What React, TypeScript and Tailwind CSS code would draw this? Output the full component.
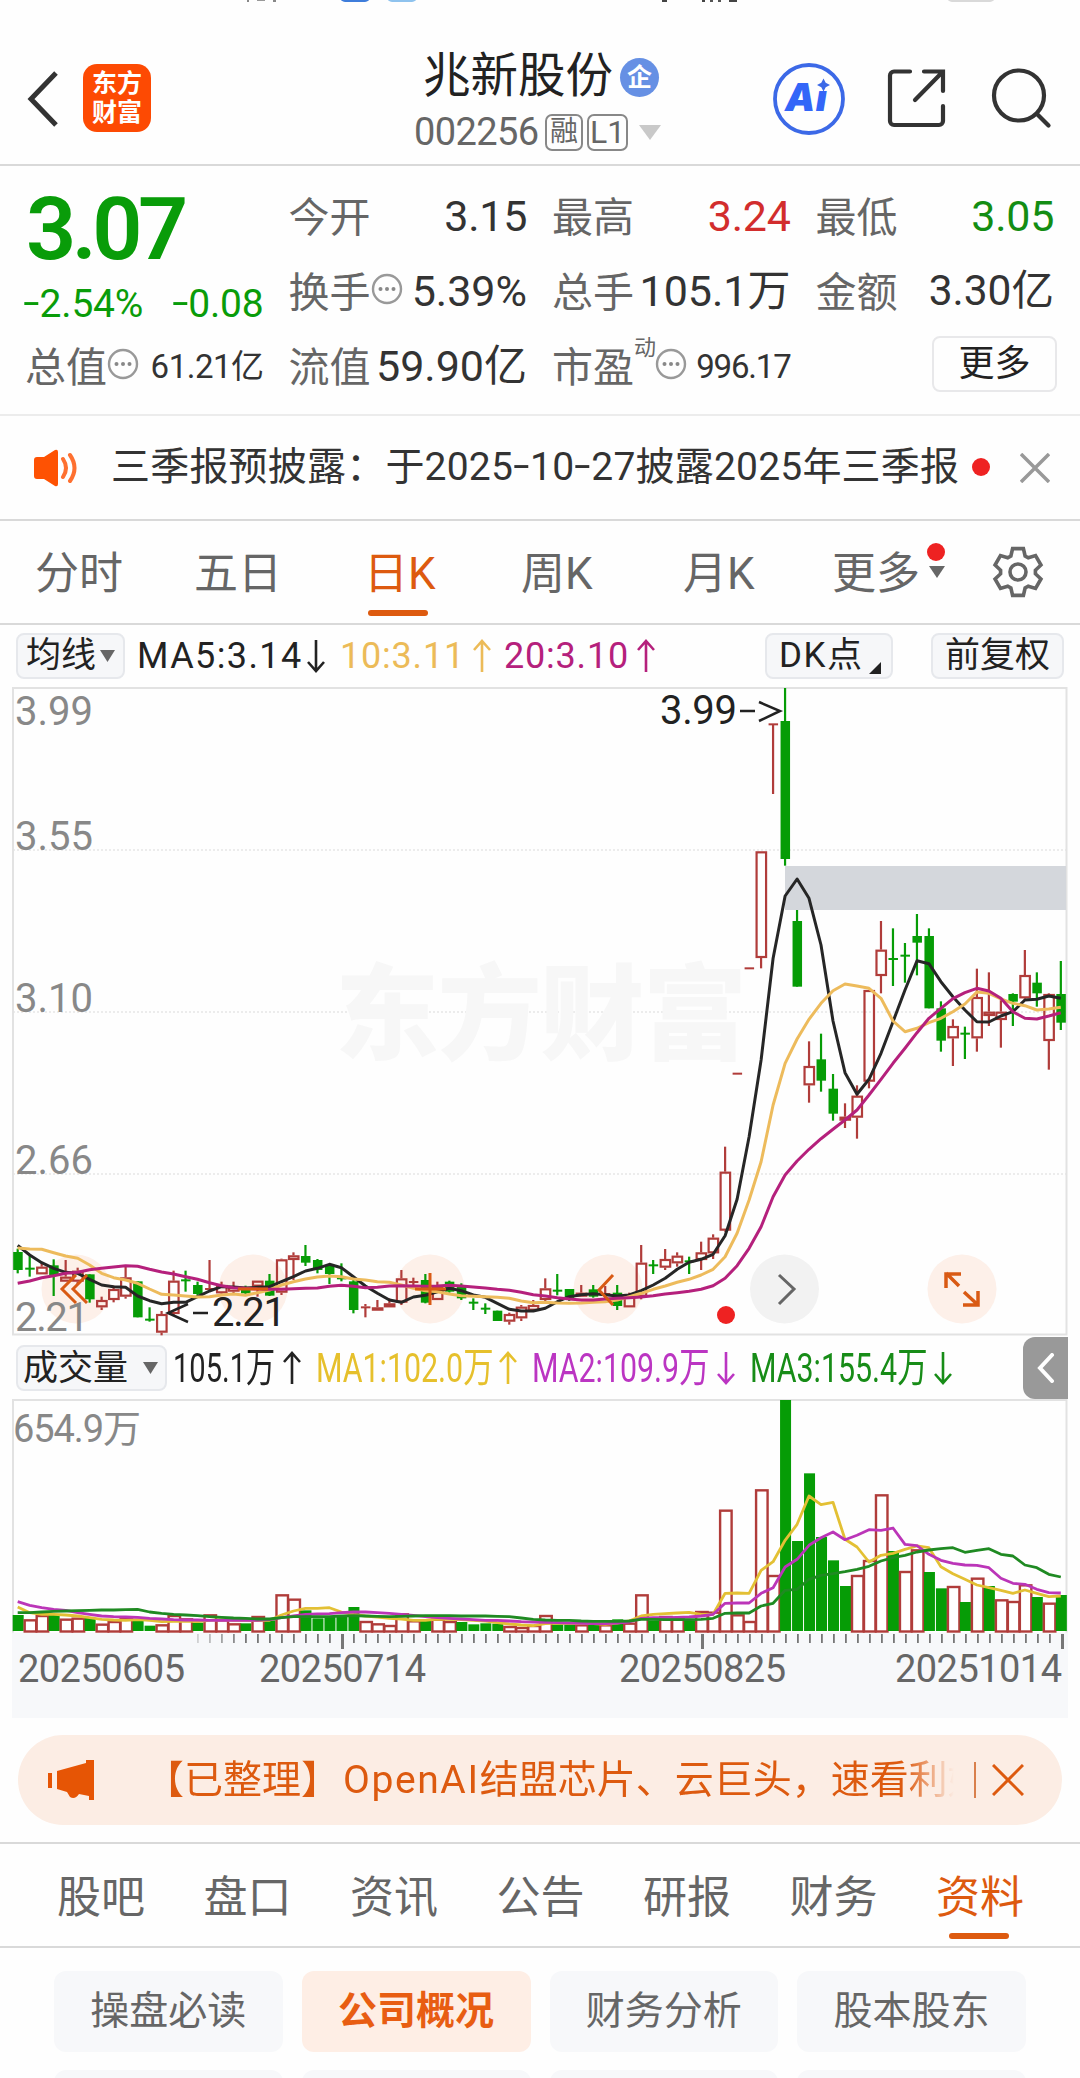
import type { ReactNode } from 'react';

type Candle = [string, number, number, number, number];

// [colour, high, body top, body bottom, low] in thirds of a pixel
const candles: Candle[] = [
  ['g', 1706, 1716, 1770, 1780], ['g', 1728, 1763, 1768, 1790], ['r', 1750, 1760, 1783, 1783], ['g', 1738, 1756, 1788, 1848],
  ['r', 1740, 1790, 1805, 1805], ['r', 1763, 1772, 1805, 1815], ['g', 1783, 1783, 1858, 1868], ['r', 1850, 1860, 1882, 1890],
  ['r', 1817, 1827, 1860, 1867], ['r', 1760, 1792, 1850, 1856], ['g', 1804, 1804, 1912, 1912], ['g', 1882, 1916, 1921, 1925],
  ['r', 1893, 1902, 1958, 1966], ['r', 1772, 1802, 1902, 1905], ['g', 1772, 1798, 1803, 1835], ['g', 1805, 1815, 1842, 1852],
  ['r', 1740, 1824, 1828, 1835], ['r', 1805, 1815, 1840, 1845], ['r', 1805, 1820, 1835, 1845], ['g', 1817, 1825, 1840, 1842],
  ['r', 1802, 1802, 1820, 1850], ['g', 1782, 1802, 1847, 1848], ['r', 1736, 1738, 1838, 1845], ['r', 1717, 1726, 1740, 1800],
  ['g', 1695, 1728, 1748, 1758], ['g', 1737, 1740, 1770, 1780], ['g', 1755, 1758, 1782, 1812], ['g', 1750, 1792, 1798, 1804],
  ['g', 1795, 1804, 1890, 1900], ['r', 1872, 1879, 1884, 1912], ['r', 1860, 1882, 1892, 1892], ['r', 1855, 1870, 1882, 1882],
  ['r', 1770, 1795, 1868, 1875], ['r', 1793, 1803, 1808, 1820], ['g', 1782, 1800, 1868, 1870], ['r', 1805, 1820, 1860, 1860],
  ['g', 1802, 1805, 1835, 1838], ['g', 1810, 1820, 1855, 1860], ['g', 1855, 1865, 1870, 1890], ['g', 1870, 1883, 1888, 1902],
  ['g', 1892, 1892, 1923, 1923], ['r', 1898, 1902, 1925, 1934], ['r', 1875, 1880, 1915, 1923], ['r', 1860, 1875, 1892, 1895],
  ['r', 1795, 1825, 1860, 1865], ['g', 1782, 1829, 1834, 1846], ['g', 1827, 1827, 1855, 1863], ['r', 1815, 1838, 1850, 1850],
  ['g', 1815, 1828, 1850, 1853], ['r', 1818, 1839, 1844, 1855], ['g', 1815, 1838, 1878, 1890], ['r', 1838, 1850, 1882, 1882],
  ['r', 1695, 1748, 1850, 1858], ['g', 1740, 1753, 1758, 1782], ['r', 1707, 1737, 1763, 1770], ['r', 1717, 1727, 1750, 1760],
  ['g', 1730, 1741, 1746, 1782], ['r', 1685, 1717, 1740, 1770], ['r', 1663, 1673, 1720, 1737], ['r', 1400, 1475, 1652, 1655],
  ['r', 1178, 1178, 1184, 1184], ['r', 862, 862, 868, 868], ['r', 514, 514, 834, 865], ['r', 130, 130, 135, 342],
  ['g', 24, 123, 537, 557], ['g', 690, 723, 920, 920], ['r', 1084, 1158, 1216, 1268], ['g', 1061, 1138, 1202, 1235],
  ['g', 1182, 1226, 1301, 1322], ['r', 1270, 1310, 1322, 1344], ['r', 1216, 1247, 1313, 1376], ['r', 930, 930, 1205, 1225],
  ['r', 723, 809, 888, 940], ['g', 745, 834, 840, 918], ['g', 789, 824, 830, 908], ['g', 702, 768, 788, 886],
  ['g', 745, 768, 985, 985], ['g', 964, 985, 1082, 1115], ['r', 1018, 1038, 1075, 1158], ['g', 1040, 1058, 1063, 1137],
  ['r', 866, 951, 1075, 1115], ['r', 877, 995, 1008, 1038], ['r', 960, 995, 1020, 1103], ['g', 940, 942, 965, 1038],
  ['r', 810, 885, 955, 960], ['g', 877, 908, 940, 980], ['r', 940, 942, 1083, 1169], ['g', 843, 942, 1028, 1050],
];

const ma5 = [
  1696, 1725, 1748, 1765, 1777, 1780, 1798, 1815, 1820, 1822, 1848, 1862, 1871, 1867, 1867, 1850, 1833, 1820, 1821, 1824, 1822, 1820,
  1805, 1790, 1773, 1765, 1753, 1763, 1790, 1818, 1840, 1860, 1867, 1851, 1846, 1835, 1825, 1832, 1845, 1852, 1870, 1888, 1893, 1893,
  1885, 1865, 1850, 1844, 1841, 1844, 1848, 1845, 1832, 1815, 1795, 1768, 1747, 1738, 1723, 1667, 1558, 1370, 1140, 835, 648, 597,
  655, 795, 1023, 1178, 1243, 1198, 1120, 1025, 930, 842, 851, 905, 950, 990, 1025, 1026, 1008, 995, 960, 958, 948, 955,
];
const ma10 = [
  1704, 1707, 1708, 1718, 1728, 1735, 1755, 1780, 1793, 1800, 1810, 1827, 1843, 1845, 1848, 1851, 1850, 1845, 1842, 1846, 1838, 1830,
  1815, 1805, 1797, 1791, 1788, 1790, 1797, 1800, 1805, 1807, 1815, 1825, 1832, 1835, 1842, 1847, 1849, 1850, 1852, 1855, 1863, 1868,
  1867, 1869, 1870, 1869, 1867, 1865, 1860, 1850, 1840, 1828, 1818, 1807, 1798, 1785, 1768, 1730, 1660, 1560, 1445, 1275, 1150, 1077,
  1018, 970, 932, 912, 918, 925, 955, 1023, 1055, 1045, 1028, 1015, 995, 972, 936, 940, 957, 970, 977, 990, 987, 982,
];
const ma20 = [
  1810, 1803, 1793, 1787, 1780, 1777, 1769, 1765, 1761, 1757, 1759, 1768, 1776, 1782, 1790, 1798, 1808, 1817, 1823, 1825, 1827, 1828,
  1828, 1826, 1825, 1824, 1819, 1816, 1819, 1823, 1822, 1818, 1817, 1818, 1819, 1818, 1816, 1818, 1821, 1824, 1828, 1831, 1837, 1844,
  1848, 1853, 1857, 1860, 1860, 1857, 1855, 1853, 1851, 1847, 1842, 1838, 1834, 1828, 1817, 1795, 1757, 1705, 1640, 1550, 1485, 1443,
  1408, 1376, 1348, 1320, 1290, 1245, 1198, 1150, 1105, 1058, 1015, 985, 956, 938, 925, 933, 955, 995, 1015, 1017, 1008, 998,
];

// top edge of every volume bar
const volumes = [
  852, 865, 852, 852, 863, 860, 860, 878, 870, 858, 870, 884, 880, 852, 862, 875, 850, 865, 877, 877, 855, 868,
  790, 803, 838, 862, 858, 855, 828, 870, 877, 882, 847, 868, 866, 863, 870, 873, 880, 877, 878, 885, 888, 882,
  852, 880, 880, 880, 880, 880, 865, 875, 790, 868, 855, 862, 868, 840, 842, 536, 850, 870, 475, 732, 207, 630,
  427, 618, 688, 765, 732, 687, 490, 660, 720, 655, 723, 772, 765, 813, 740, 765, 805, 810, 760, 798, 815, 792,
];
const volumeColors = 'grrgrrgrrrggrrrgrrrgrgrrgggggrrrrrgrrggggrrrrggrgrgrrgrrgrrrrrrrggggggrrrgrrggrgrgrrrgrg';
const vol1 = [
  828, 845, 850, 850, 852, 855, 860, 865, 867, 868, 866, 868, 872, 871, 870, 872, 868, 866, 868, 868, 869, 868,
  852, 840, 832, 832, 830, 843, 850, 855, 858, 862, 864, 868, 868, 864, 865, 866, 868, 870, 875, 879, 882, 884,
  878, 876, 878, 878, 878, 880, 876, 870, 855, 850, 848, 846, 844, 850, 850, 787, 786, 787, 718, 692, 628, 580,
  495, 521, 514, 625, 648, 693, 673, 667, 655, 645, 650, 707, 728, 745, 762, 770, 778, 787, 777, 787, 797, 795,
];
const vol2 = [
  812, 823, 830, 835, 838, 845, 850, 855, 857, 858, 859, 862, 864, 866, 867, 867, 868, 868, 868, 868, 868, 866,
  860, 855, 850, 849, 848, 845, 843, 843, 845, 847, 850, 853, 857, 860, 862, 864, 866, 868, 868, 870, 872, 873,
  874, 875, 876, 877, 878, 878, 876, 873, 862, 860, 860, 859, 858, 855, 850, 817, 816, 816, 787, 770, 708, 685,
  643, 620, 603, 626, 613, 596, 598, 591, 640, 644, 670, 688, 697, 702, 703, 710, 742, 757, 760, 775, 785, 786,
];
const vol3 = [
  845, 845, 843, 841, 840, 839, 838, 837, 837, 836, 835, 843, 847, 850, 852, 854, 857, 859, 861, 862, 864, 864,
  860, 857, 857, 857, 857, 855, 854, 855, 856, 857, 856, 855, 854, 854, 854, 855, 855, 855, 856, 857, 861, 865,
  867, 868, 868, 870, 871, 871, 871, 870, 865, 865, 866, 866, 866, 865, 862, 847, 846, 846, 825, 817, 778, 775,
  745, 733, 728, 722, 715, 706, 690, 680, 673, 663, 657, 653, 650, 664, 658, 653, 670, 675, 702, 710, 730, 738,
];

const cx = (i: number) => 17.7 + i * 11.99;
const py = (v: number) => 680 + v / 3;
const vy = (v: number) => 1330 + v / 3;
const line = (data: number[], y: (v: number) => number) => data.map((v, i) => `${cx(i).toFixed(1)},${y(v).toFixed(1)}`).join(' ');

// six teeth, four corners each
const gear = [0, 60, 120, 180, 240, 300]
  .flatMap((a) => [[a - 24, 17.5], [a - 13, 24], [a + 13, 24], [a + 24, 17.5]])
  .map(([a, r]) => `${26 + r * Math.sin((a * Math.PI) / 180)},${26 - r * Math.cos((a * Math.PI) / 180)}`)
  .join(' ');

function Caret({ className }: { className: string }) {
  return (
    <svg viewBox="0 0 16 12" preserveAspectRatio="none" className={className} fill="currentColor">
      <path d="M0 0h16L8 12z" />
    </svg>
  );
}

function Arrow({ down }: { down?: boolean }) {
  return (
    <svg viewBox="0 0 20 36" className="h-9 w-5 shrink-0" fill="none" stroke="currentColor" strokeWidth="2.600">
      {down ? <path d="M10 2v31M2 24l8 9 8-9" /> : <path d="M10 34V3M2 12l8-9 8 9" />}
    </svg>
  );
}

function Dash() {
  return <span className="relative -top-[2px] mx-[3px] inline-block scale-x-150">-</span>;
}

function Info() {
  return (
    <svg viewBox="0 0 32 32" className="-mt-[5px] h-8 w-8 shrink-0" fill="none" stroke="#999" strokeWidth="2.400">
      <circle cx="16" cy="16" r="14" />
      <g fill="#888" stroke="none">
        <circle cx="9.500" cy="16" r="2" />
        <circle cx="16" cy="16" r="2" />
        <circle cx="22.500" cy="16" r="2" />
      </g>
    </svg>
  );
}

function StatusBar() {
  return (
    <div className="relative h-[18px] shrink-0 overflow-hidden">
      <div className="absolute -top-2 left-[340px] h-[10px] w-[30px] rounded-md bg-[#3f7ddb]" />
      <div className="absolute -top-2 left-[387px] h-[10px] w-[30px] rounded-md bg-[#8fc3ee]" />
      <div className="absolute -top-2 left-[947px] h-[10px] w-[48px] rounded-md bg-[#d9d9d9]" />
      <div className="absolute top-0 left-[247px] h-[2px] w-[2px] bg-[#888]" />
      <div className="absolute top-0 left-[257px] h-px w-[8px] bg-[#999]" />
      <div className="absolute top-0 left-[273px] h-[2px] w-[3px] bg-[#888]" />
      <div className="absolute top-0 left-[662px] h-[2px] w-[5px] bg-[#444]" />
      <div className="absolute top-0 left-[702px] h-[2px] w-[3px] bg-[#444]" />
      <div className="absolute top-0 left-[710px] h-[2px] w-[3px] bg-[#555]" />
      <div className="absolute top-0 left-[718px] h-[2px] w-[3px] bg-[#555]" />
      <div className="absolute top-0 left-[729px] h-[2px] w-[8px] bg-[#444]" />
    </div>
  );
}

function Header() {
  return (
    <header className="flex h-[148px] shrink-0 border-b-2 border-[#d9d9d9]">
      <div className="flex w-[400px] pt-[46px] pl-[26px]">
        <svg viewBox="0 0 34 58" className="mt-[6px] h-[58px] w-[34px]" fill="none" stroke="#333" strokeWidth="5">
          <path d="M30 3L5 29l25 26" />
        </svg>
        <div className="ml-[23px] flex h-[68px] w-[68px] flex-col items-center justify-center rounded-[14px] bg-[#fd4a03] text-[25px] leading-[29px] font-bold text-white">
          <span>东方</span>
          <span>财富</span>
        </div>
      </div>
      <div className="w-[280px]">
        <div className="mt-[27px] flex h-[64px] items-center pl-[23px]">
          <h1 className="w-[197px] text-[47.500px] leading-none whitespace-nowrap text-[#222]">兆新股份</h1>
          <span className="flex h-[39px] w-[39px] items-center justify-center rounded-full bg-[#6690e4] text-[25px] leading-none font-bold text-white">企</span>
        </div>
        <div className="mt-[2px] flex h-[42px] items-center pl-[14px] text-[#666]">
          <span className="w-[131px] text-[38px] leading-none tracking-[-0.6px]">002256</span>
          <span className="flex h-[37px] w-[38px] items-center justify-center rounded-[7px] border-2 border-[#888] text-[28px] leading-none">融</span>
          <span className="ml-[4px] flex h-[37px] w-[41px] items-center justify-center rounded-[7px] border-2 border-[#888] text-[32px] leading-none">L1</span>
          <Caret className="ml-[11px] h-[15px] w-[22px] text-[#c9c9c9]" />
        </div>
      </div>
      <div className="flex flex-1 pl-[92px]">
        <svg viewBox="0 0 74 74" className="mt-[44px] h-[74px] w-[74px]">
          <circle cx="37" cy="37" r="34" fill="none" stroke="#3c69e7" strokeWidth="3.800" />
          <text x="13" y="49" fontSize="38" fontWeight="900" fontStyle="italic" fill="#3366f8" className="font-['Inter']" textLength="42">Ai</text>
          <path d="M42 14h16v15H42z" fill="#fefefe" />
          <path d="M51.500 16.500l2.200 4.300 4.300 2.200-4.300 2.200-2.200 4.300-2.200-4.300-4.300-2.200 4.300-2.200z" fill="#3c69e7" />
        </svg>
        <svg viewBox="0 0 62 62" className="mt-[49px] ml-[40px] h-[62px] w-[62px]" fill="none" stroke="#333" strokeWidth="4.200" strokeLinecap="round">
          <path d="M24 4.500H8a4 4 0 0 0-4 4v45.500a4 4 0 0 0 4 4h45a4 4 0 0 0 4-4V39" />
          <path d="M38 4.500h19V24M56 5.500L29 33" />
        </svg>
        <svg viewBox="0 0 64 64" className="mt-[49px] ml-[42px] h-[64px] w-[64px]" fill="none" stroke="#333" strokeWidth="4.200" strokeLinecap="round">
          <circle cx="29" cy="28.500" r="25" />
          <path d="M47.500 47.500L58.500 58.500" />
        </svg>
      </div>
    </header>
  );
}

function Quote({ label, info, sup, value, className = 'text-[43px] tracking-[-0.3px] text-[#333]' }: { label: string; info?: boolean; sup?: string; value: string; className?: string }) {
  return (
    <div className="-ml-px flex items-center whitespace-nowrap">
      <span className="mt-[3px] text-[41px] leading-none text-[#666]">{label}</span>
      {sup && <span className="-mr-px mb-[38px] text-[22px] leading-none text-[#666]">{sup}</span>}
      {info && <Info />}
      <span className="w-0 flex-1" />
      <span className={`leading-none ${className}`}>{value}</span>
    </div>
  );
}

function Quotes() {
  return (
    <section className="h-[250px] shrink-0 border-b-2 border-[#ececec] px-[26px] pt-[13px]">
      <div className="grid grid-cols-4 grid-rows-[75px_75px_75px] gap-x-[26px]">
        <div className="row-span-2 text-[#099c09]">
          <div className="mt-[8px] text-[88px] leading-[84px] font-semibold tracking-[-4.500px]">3.07</div>
          <div className="-ml-[3px] mt-[12px] flex justify-between text-[39px] leading-[42px] tracking-[-0.2px]">
            <span><Dash />2.54%</span>
            <span><Dash />0.08</span>
          </div>
        </div>
        <Quote label="今开" value="3.15" />
        <Quote label="最高" value="3.24" className="text-[43px] tracking-[-0.3px] text-[#d22d2d]" />
        <Quote label="最低" value="3.05" className="text-[43px] tracking-[-0.3px] text-[#138d13]" />
        <Quote label="换手" info value="5.39%" className="text-[43px] text-[#333]" />
        <Quote label="总手" value="105.1万" className="text-[43px] text-[#333]" />
        <Quote label="金额" value="3.30亿" className="text-[42.500px] text-[#333]" />
        <Quote label="总值" info value="61.21亿" className="text-[33px] tracking-[-0.5px] text-[#333]" />
        <Quote label="流值" value="59.90亿" className="text-[43px] text-[#333]" />
        <Quote label="市盈" sup="动" info value="996.17" className="text-[33px] tracking-[-1.200px] text-[#333]" />
        <div className="-mr-[3px] mb-[5px] flex items-center justify-end">
          <button className="h-[56px] w-[125px] rounded-lg border-2 border-[#e8e8ea] text-[36px] leading-none text-[#222]">更多</button>
        </div>
      </div>
    </section>
  );
}

function Notice() {
  return (
    <div className="flex h-[105px] shrink-0 items-center border-b-2 border-[#d9d9d9] pl-[32px] whitespace-nowrap">
      <svg viewBox="0 0 48 38" className="h-[38px] w-[48px] shrink-0" fill="#fe5203">
        <path d="M2 11q0-3 3-3h7L23 1q3-1 3 2v32q0 3-3 2l-11-7H5q-3 0-3-3z" />
        <path d="M31 10q6 9 0 18M38 6q9 13 0 26" fill="none" stroke="#fe7030" strokeWidth="4" strokeLinecap="round" />
      </svg>
      <span className="ml-[31px] w-[861px] shrink-0 text-[39px] leading-none tracking-[0.200px] text-[#333]">三季报预披露：于2025<Dash />10<Dash />27披露2025年三季报</span>
      <span className="-mt-[2px] h-[18px] w-[18px] shrink-0 rounded-full bg-[#ee2222]" />
      <svg viewBox="0 0 30 30" className="ml-[30px] h-[30px] w-[30px] shrink-0" stroke="#999" strokeWidth="3.500">
        <path d="M1 1l28 28M29 1L1 29" />
      </svg>
    </div>
  );
}

function PeriodTabs() {
  return (
    <nav className="flex h-[104px] shrink-0 items-center border-b-2 border-[#d9d9d9] pt-[4px] text-[44px] leading-none whitespace-nowrap text-[#666]">
      <span className="w-[159px] pl-[35px]">分时</span>
      <span className="w-[205px] pl-[35px]">五日</span>
      <span className="relative w-[157px] text-[#dd5a0f]">
        日K
        <i className="absolute top-[58px] left-[4px] h-[6px] w-[60px] rounded-full bg-[#dd5a0f]" />
      </span>
      <span className="w-[162px]">周K</span>
      <span className="w-[149px]">月K</span>
      <span className="relative w-[160px]">
        更多
        <i className="absolute -top-[9px] left-[95px] h-[18px] w-[18px] rounded-full bg-[#ee2222]" />
        <Caret className="absolute top-[14px] left-[97px] h-[12px] w-[16px]" />
      </span>
      <svg viewBox="0 0 52 52" className="-mt-[4px] h-[52px] w-[52px]" fill="none" stroke="#666" strokeWidth="3.600">
        <polygon points={gear} />
        <circle cx="26" cy="26" r="8" />
      </svg>
    </nav>
  );
}

function Chip({ className, children }: { className: string; children: ReactNode }) {
  return <div className={`flex shrink-0 items-center rounded-lg border-2 border-[#e6e8ec] bg-[#f6f7f9] text-[35px] leading-none whitespace-nowrap text-[#222] ${className}`}>{children}</div>;
}

function MaBar() {
  return (
    <div className="flex h-[62px] shrink-0 items-center pb-px pl-[16px] text-[36px] leading-none whitespace-nowrap">
      <Chip className="h-[46px] w-[109px] pl-[8px]">
        均线
        <Caret className="ml-[4px] h-[12px] w-[15px] text-[#666]" />
      </Chip>
      <span className="ml-[12px] flex w-[203px] items-center text-[#222]">
        <span className="w-[169px] tracking-[1.400px]">MA5:3.14</span>
        <Arrow down />
      </span>
      <span className="flex w-[164px] items-center text-[#ecbb58]">
        <span className="w-[132px] tracking-[0.8px]">10:3.11</span>
        <Arrow />
      </span>
      <span className="flex w-[261px] items-center text-[#b5207c]">
        <span className="w-[132px] tracking-[0.8px]">20:3.10</span>
        <Arrow />
      </span>
      <Chip className="h-[46px] w-[128px] pl-[12px]">
        <span className="tracking-[1.500px]">DK</span>
        点
        <svg viewBox="0 0 12 12" className="mt-[24px] ml-[7px] h-[12px] w-[12px]" fill="#222">
          <path d="M12 0v12H0z" />
        </svg>
      </Chip>
      <Chip className="ml-[38px] h-[46px] w-[133px] justify-center">前复权</Chip>
    </div>
  );
}

function PriceChart() {
  return (
    <svg viewBox="0 687 1080 650" className="h-[650px] w-[1080px] shrink-0">
      <g stroke="#e6e6e6" strokeWidth="1.500" strokeDasharray="2 2">
        <path d="M13 850H1066M13 1012H1066M13 1174H1066" />
      </g>
      <rect x="13" y="688" width="1053.500" height="646.500" fill="none" stroke="#e2e2e2" strokeWidth="2" />
      <text x="335" y="1052" fontSize="104" fontWeight="900" fill="#f7f7f7" textLength="412">东方财富</text>
      <rect x="785" y="866" width="281" height="44" fill="#d4d7dc" />
      <g fill="#fdf0e9">
        <circle cx="76" cy="1289" r="34.500" />
        <circle cx="253" cy="1289" r="34.500" />
        <circle cx="430" cy="1289" r="34.500" />
        <circle cx="608" cy="1289" r="34.500" />
        <circle cx="962" cy="1289" r="34.500" />
      </g>
      <circle cx="784.500" cy="1289" r="34.500" fill="#f2f2f2" />
      <g fill="#888" fontSize="40">
        <text x="15" y="725">3.99</text>
        <text x="15" y="850">3.55</text>
        <text x="15" y="1012">3.10</text>
        <text x="15" y="1174">2.66</text>
        <text x="15" y="1331" textLength="74">2.21</text>
      </g>
      {candles.map(([color, high, top, bottom, low], i) => {
        const x = cx(i);
        const h = Math.max((bottom - top) / 3, 2);
        if (color === 'g') {
          return (
            <g key={i} fill="#069c06">
              <rect x={x - 1.1} y={py(high)} width="2.200" height={(low - high) / 3} />
              <rect x={x - 4.5} y={py(top)} width="9.500" height={h} />
            </g>
          );
        }
        return (
          <g key={i} fill="#b03c3a">
            <rect x={x - 1.1} y={py(high)} width="2.200" height={(top - high) / 3} />
            <rect x={x - 1.1} y={py(bottom)} width="2.200" height={(low - bottom) / 3} />
            {h < 3 ? (
              <rect x={x - 4.5} y={py(top)} width="9.500" height={h} />
            ) : (
              <rect x={x - 4.5} y={py(top) + 1} width="9.500" height={h - 2} fill="none" stroke="#b03c3a" strokeWidth="2.200" />
            )}
          </g>
        );
      })}
      <g fill="none" strokeWidth="3" strokeLinejoin="round">
        <polyline points={line(ma5, py)} stroke="#262626" />
        <polyline points={line(ma10, py)} stroke="#edbb5c" />
        <polyline points={line(ma20, py)} stroke="#b5207c" />
      </g>
      <g fill="none" stroke="#222" strokeWidth="2.500">
        <path d="M759 702l21 9-21 10M740 711h15" />
        <path d="M188 1304l-20 9 20 9M193 1313h15" />
      </g>
      <g fill="#222" fontSize="40">
        <text x="660" y="724" textLength="77">3.99</text>
        <text x="212" y="1326" textLength="74">2.21</text>
      </g>
      <g fill="none" stroke="#d95a14" strokeWidth="3">
        <path d="M76 1275l-14 14 14 14M87 1275l-14 14 14 14" />
        <path d="M238 1289h30M415 1289h31M430 1273v32" />
        <path d="M613 1275l-14 15 14 15" />
        <path d="M959 1286l-13-13M946 1288v-14h15M964 1292l14 13M978 1291v14h-15" strokeWidth="3.500" />
      </g>
      <path d="M779 1275l15 14-15 15" fill="none" stroke="#666" strokeWidth="3" />
      <circle cx="726" cy="1315" r="9" fill="#ee2222" />
    </svg>
  );
}

function VolumeBar() {
  return (
    <div className="flex h-[62px] shrink-0 items-center pl-[16px] text-[41px] leading-none whitespace-nowrap">
      <Chip className="h-[46px] w-[151px] justify-between pr-[7px] pl-[5px]">
        成交量
        <Caret className="h-[12px] w-[15px] text-[#666]" />
      </Chip>
      <span className="ml-[6px] flex w-[143px] items-center text-[#222]">
        <span className="w-[109px] origin-left scale-x-[0.71]">105.1万</span>
        <Arrow />
      </span>
      <span className="flex w-[216px] items-center text-[#e6c02c]">
        <span className="w-[182px] origin-left scale-x-[0.740]">MA1:102.0万</span>
        <Arrow />
      </span>
      <span className="flex w-[218px] items-center text-[#bb35c2]">
        <span className="w-[184px] origin-left scale-x-[0.740]">MA2:109.9万</span>
        <Arrow down />
      </span>
      <span className="flex w-[273px] items-center text-[#178c17]">
        <span className="w-[183px] origin-left scale-x-[0.740]">MA3:155.4万</span>
        <Arrow down />
      </span>
      <div className="flex h-[62px] w-[45px] items-center justify-center rounded-l-[12px] bg-[#999]">
        <svg viewBox="0 0 18 30" className="h-[30px] w-[18px]" fill="none" stroke="#fff" strokeWidth="4" strokeLinecap="round">
          <path d="M15 2L3 15l12 13" />
        </svg>
      </div>
    </div>
  );
}

function VolumeChart() {
  return (
    <svg viewBox="0 1398 1080 320" className="h-[320px] w-[1080px] shrink-0">
      <path d="M13 1632V1399H1066.500V1632" fill="none" stroke="#e2e2e2" strokeWidth="2" />
      <rect x="12" y="1631.500" width="1056" height="85.500" fill="#f7f8fa" />
      <text x="13" y="1441" fontSize="38" fill="#888" textLength="128">654.9万</text>
      {volumes.map((v, i) => {
        const x = cx(i);
        return volumeColors[i] === 'g' ? (
          <rect key={i} x={x - 5} y={vy(v)} width="11" height={1630 - vy(v)} fill="#069c06" />
        ) : (
          <rect key={i} x={x - 5} y={vy(v) + 1} width="11.500" height={1629.5 - vy(v)} fill="#fff" stroke="#b03c3a" strokeWidth="2.400" />
        );
      })}
      <g fill="none" strokeWidth="2.800" strokeLinejoin="round">
        <polyline points={line(vol1, vy)} stroke="#e3c034" />
        <polyline points={line(vol2, vy)} stroke="#bb35b8" />
        <polyline points={line(vol3, vy)} stroke="#1f8a22" />
      </g>
      {Array.from({ length: 73 }, (_, i) => {
        const major = i === 12 || i === 42 || i === 72;
        return <rect key={i} x={197 + i * 12} y="1633" width={major ? 3 : 1.8} height={major ? 15 : 9} fill="#777" opacity={Math.min(1, 0.3 + i * 0.18)} />;
      })}
      <g fill="#666" fontSize="38">
        <text x="18" y="1681" textLength="167">20250605</text>
        <text x="259" y="1681" textLength="167">20250714</text>
        <text x="619" y="1681" textLength="167">20250825</text>
        <text x="895" y="1681" textLength="167">20251014</text>
      </g>
    </svg>
  );
}

function Banner() {
  return (
    <div className="mx-[18px] mt-[16px] mb-[17px] flex h-[90px] shrink-0 items-center rounded-full bg-[#fcede4] whitespace-nowrap">
      <svg viewBox="0 0 46 40" className="ml-[30px] h-[40px] w-[46px] shrink-0" fill="#e65505">
        <path d="M0 13h4v15H0zM9 11L38 3V0h8v40h-5v-4l-10-2q-4 6-9 3l-3-5-10-3z" />
      </svg>
      <span className="ml-[48px] w-[820px] shrink-0 overflow-hidden mask-r-from-93% mask-r-to-99% pl-[3px] text-[39px] leading-[60px] text-[#dd5a0f]">
        【已整理】<span className="ml-[3px] tracking-[1.600px]">OpenAI</span>结盟芯片、云巨头，速看利好
      </span>
      <span className="ml-[12px] h-[36px] w-[2px] bg-[#d9804c]" />
      <svg viewBox="0 0 32 32" className="ml-[16px] h-[32px] w-[32px] shrink-0" stroke="#dd5a0f" strokeWidth="3">
        <path d="M1 1l30 30M31 1L1 31" />
      </svg>
    </div>
  );
}

function SectionTabs() {
  return (
    <nav className="flex h-[106px] shrink-0 items-center border-y-2 border-[#d9d9d9] pt-[5px] pl-[57px] text-[44px] leading-none whitespace-nowrap text-[#666]">
      {['股吧', '盘口', '资讯', '公告', '研报', '财务'].map((tab) => (
        <span key={tab} className="w-[146.500px]">{tab}</span>
      ))}
      <span className="relative text-[#dd5a0f]">
        资料
        <i className="absolute top-[57px] left-[13px] h-[6px] w-[60px] rounded-full bg-[#dd5a0f]" />
      </span>
    </nav>
  );
}

function SubTabs() {
  return (
    <div className="grid grid-cols-4 gap-x-[19px] gap-y-[18px] px-[54px] pt-[23px] text-[39px] leading-none text-[#666]">
      {['操盘必读', '公司概况', '财务分析', '股本股东'].map((tab, i) => (
        <div key={tab} className={`flex h-[81px] items-center justify-center rounded-[12px] ${i === 1 ? 'bg-[#feeee5] font-bold text-[#e85d12]' : 'bg-[#f7f8fa]'}`}>
          {tab}
        </div>
      ))}
      {[0, 1, 2, 3].map((i) => (
        <div key={i} className="h-[81px] rounded-[12px] bg-[#f7f8fa]" />
      ))}
    </div>
  );
}

export default function App() {
  return (
    <div className="flex h-[2078px] w-[1080px] flex-col overflow-hidden bg-[#fefefe] font-['Roboto','Noto_Sans_CJK_SC',sans-serif]">
      <StatusBar />
      <Header />
      <Quotes />
      <Notice />
      <PeriodTabs />
      <MaBar />
      <PriceChart />
      <VolumeBar />
      <VolumeChart />
      <Banner />
      <SectionTabs />
      <SubTabs />
    </div>
  );
}
